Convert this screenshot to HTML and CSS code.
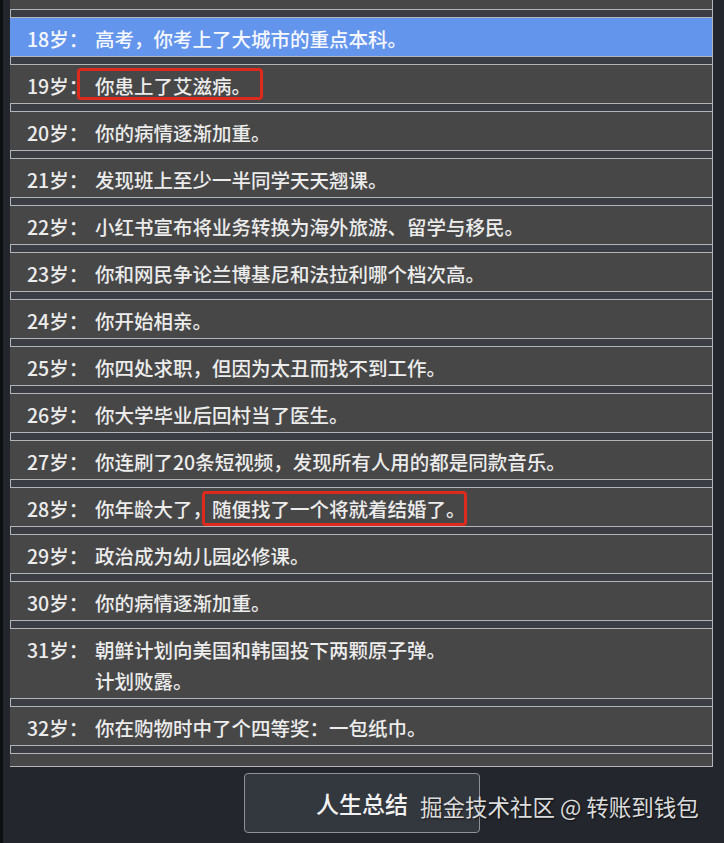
FILE: index.html
```html
<!DOCTYPE html>
<html lang="zh-CN">
<head>
<meta charset="utf-8">
<title>人生重开模拟器</title>
<link rel="stylesheet" href="styles.css">
</head>
<body>
<div class="page">
  <div class="list-wrap">
    <ul class="trajectory">
      <li class="item"><div class="row"><span class="age"></span><span class="event">&nbsp;</span></div></li>
      <li class="item active"><div class="row"><span class="age">18岁：</span><span class="event">高考，你考上了大城市的重点本科。</span></div></li>
      <li class="item"><div class="row"><span class="age">19岁：</span><span class="event"><span class="mark mark-a">你患上了艾滋病。</span></span></div></li>
      <li class="item"><div class="row"><span class="age">20岁：</span><span class="event">你的病情逐渐加重。</span></div></li>
      <li class="item"><div class="row"><span class="age">21岁：</span><span class="event">发现班上至少一半同学天天翘课。</span></div></li>
      <li class="item"><div class="row"><span class="age">22岁：</span><span class="event">小红书宣布将业务转换为海外旅游、留学与移民。</span></div></li>
      <li class="item"><div class="row"><span class="age">23岁：</span><span class="event">你和网民争论兰博基尼和法拉利哪个档次高。</span></div></li>
      <li class="item"><div class="row"><span class="age">24岁：</span><span class="event">你开始相亲。</span></div></li>
      <li class="item"><div class="row"><span class="age">25岁：</span><span class="event">你四处求职，但因为太丑而找不到工作。</span></div></li>
      <li class="item"><div class="row"><span class="age">26岁：</span><span class="event">你大学毕业后回村当了医生。</span></div></li>
      <li class="item"><div class="row"><span class="age">27岁：</span><span class="event">你连刷了20条短视频，发现所有人用的都是同款音乐。</span></div></li>
      <li class="item"><div class="row"><span class="age">28岁：</span><span class="event">你年龄大了，<span class="mark mark-b">随便找了一个将就着结婚了。</span></span></div></li>
      <li class="item"><div class="row"><span class="age">29岁：</span><span class="event">政治成为幼儿园必修课。</span></div></li>
      <li class="item"><div class="row"><span class="age">30岁：</span><span class="event">你的病情逐渐加重。</span></div></li>
      <li class="item"><div class="row"><span class="age">31岁：</span><span class="event"><span class="line">朝鲜计划向美国和韩国投下两颗原子弹。</span><span class="line">计划败露。</span></span></div></li>
      <li class="item"><div class="row"><span class="age">32岁：</span><span class="event">你在购物时中了个四等奖：一包纸巾。</span></div></li>
      <li class="item"><div class="row"><span class="age">33岁：</span><span class="event">你感到十分迷茫。</span></div></li>
    </ul>
  </div>
  <div class="actions">
    <button class="summary" type="button">人生总结</button>
  </div>
  <div class="watermark">掘金技术社区 @ 转账到钱包</div>
</div>
</body>
</html>
```
FILE: styles.css
```css
html {
  background: #23262d;
}
body {
  margin: 0;
  height: 843px;
  overflow: hidden;
  border-left: 3px solid #0e0f12;
  background: #23262d;
  font-family: "Noto Sans CJK SC", "Microsoft YaHei", sans-serif;
}
.page {
  height: 843px;
}
.list-wrap {
  margin-left: 7px;
  width: 702px;
  height: 766px;
  overflow: hidden;
  background: #3a3d43;
  border-right: 1px solid #b3b5b8;
  border-bottom: 1px solid #b3b5b8;
}
.trajectory {
  list-style: none;
  margin: -29px 0 0 0;
  padding: 0;
}
.item::after {
  content: "";
  display: block;
  height: 7px;
  background: #3a3d43;
  border: 1px solid #b3b5b8;
  border-right: none;
}
.row {
  display: grid;
  grid-template-columns: 68px 1fr;
  padding: 5px 0 2px 17px;
  background: #474747;
  color: #ececec;
  font-size: 19.5px;
  font-weight: 500;
  line-height: 31px;
}
.active .row {
  background: #6495ed;
  color: #f6f8ff;
}
.age {
  white-space: nowrap;
}
.event {
  white-space: nowrap;
}
.line {
  display: block;
}
.mark {
  position: relative;
}
.mark::before {
  content: "";
  position: absolute;
  border: 3px solid #dc2a1f;
  border-radius: 4px;
}
.mark-a::before {
  left: -18px;
  right: -12px;
  top: -3px;
  bottom: 0;
}
.mark-b::before {
  left: -10px;
  right: -1px;
  top: -3px;
  bottom: -3px;
}
.actions {
  display: flex;
  justify-content: center;
  margin-top: 6px;
  margin-left: -3px;
}
.summary {
  width: 236px;
  height: 60px;
  background: #33373e;
  border: 1px solid #8e9196;
  border-radius: 4px;
  color: #f2f2f2;
  font-family: "Noto Sans CJK SC", "Microsoft YaHei", sans-serif;
  font-size: 23px;
  font-weight: 500;
  padding: 0;
}
.watermark {
  position: absolute;
  left: 420px;
  top: 791px;
  font-size: 22.5px;
  line-height: 30px;
  color: #dcdcdc;
  text-shadow: 1px 1px 2px rgba(0, 0, 0, 0.6);
  white-space: nowrap;
  font-family: "Noto Sans CJK SC", "Microsoft YaHei", sans-serif;
}
```
